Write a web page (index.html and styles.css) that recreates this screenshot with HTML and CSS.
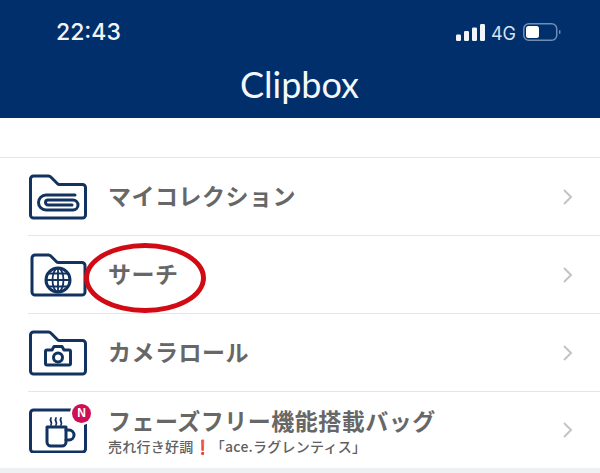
FILE: index.html
```html
<!DOCTYPE html>
<html lang="ja">
<head>
<meta charset="utf-8">
<title>Clipbox</title>
<link rel="stylesheet" href="styles.css">
</head>
<body>
<header class="header">
  <div class="status">
    <span class="time">22:43</span>
    <div class="status-right">
      <svg class="signal" width="29" height="17" viewBox="0 0 29 17"><rect x="0" y="10.500" width="5" height="6.500" rx="1.200"/><rect x="8" y="7" width="5" height="10" rx="1.200"/><rect x="16" y="3.500" width="5" height="13.500" rx="1.200"/><rect x="24" y="0" width="5" height="17" rx="1.200"/></svg>
      <span class="net">4G</span>
      <svg class="battery" width="38" height="18" viewBox="0 0 38 18"><rect x="0.750" y="0.750" width="33" height="16.500" rx="5" fill="none" stroke="#6f8db5" stroke-width="1.500"/><rect x="3" y="3" width="13" height="12" rx="2.500" fill="#fff"/><rect x="36" y="7" width="1.400" height="4" rx="0.700" fill="#6f8db5"/></svg>
    </div>
  </div>
  <h1 class="title">Clipbox</h1>
</header>
<main class="list">
  <div class="row">
    <svg class="icon" width="60" height="46" viewBox="0 0 60 46">
      <path class="ln" d="M2.500 5a3 3 0 0 1 3-3h15a3 3 0 0 1 2.300 1l6.500 6.500a3 3 0 0 0 2.300 1H54.500a3 3 0 0 1 3 3V41a3 3 0 0 1-3 3h-49a3 3 0 0 1-3-3z"/>
      <path class="ln" d="M47 21H18a7.500 7.500 0 0 0 0 15h27a5 5 0 0 0 0-10H20a2.500 2.500 0 0 0 0 5h24"/>
    </svg>
    <span class="label">マイコレクション</span>
    <svg class="chev" width="11" height="18" viewBox="0 0 11 18"><path d="M2 2l7 7-7 7"/></svg>
  </div>
  <div class="row">
    <svg class="icon" width="60" height="46" viewBox="0 0 60 46">
      <path class="ln" d="M4 6a3 3 0 0 1 3-3h13.500a3 3 0 0 1 2.300 1l5.500 5.500a3 3 0 0 0 2.300 1H54a3 3 0 0 1 3 3V40a3 3 0 0 1-3 3H7a3 3 0 0 1-3-3z"/>
      <circle class="ln" cx="30" cy="28" r="12"/>
      <ellipse class="thin" cx="30" cy="28" rx="5.500" ry="12"/>
      <path class="thin" d="M30 16v24M18 28h24M20 21.500h20M20 34.500h20"/>
    </svg>
    <span class="label">サーチ</span>
    <svg class="chev" width="11" height="18" viewBox="0 0 11 18"><path d="M2 2l7 7-7 7"/></svg>
  </div>
  <div class="row">
    <svg class="icon" width="60" height="46" viewBox="0 0 60 46">
      <path class="ln" d="M2.500 5a3 3 0 0 1 3-3h15a3 3 0 0 1 2.300 1l6.500 6.500a3 3 0 0 0 2.300 1H54.500a3 3 0 0 1 3 3V41a3 3 0 0 1-3 3h-49a3 3 0 0 1-3-3z"/>
      <path class="ln" d="M19 20h5l2-3.500h8l2 3.500h5a1.500 1.500 0 0 1 1.500 1.500v12a1.500 1.500 0 0 1-1.500 1.500H19a1.500 1.500 0 0 1-1.500-1.500v-12A1.500 1.500 0 0 1 19 20z"/>
      <circle class="ln" cx="30" cy="27.500" r="4.500"/>
    </svg>
    <span class="label">カメラロール</span>
    <svg class="chev" width="11" height="18" viewBox="0 0 11 18"><path d="M2 2l7 7-7 7"/></svg>
  </div>
  <div class="row row-last">
    <svg class="icon" width="60" height="46" viewBox="0 0 60 46">
      <path class="ln" d="M43 3H5.500a3 3 0 0 0-3 3v36a3 3 0 0 0 3 3h49a3 3 0 0 0 3-3V17"/>
      <path class="ln" d="M19 20h19v15a4 4 0 0 1-4 4H23a4 4 0 0 1-4-4z"/>
      <path class="ln" d="M38 23h3a4.500 4.500 0 0 1 0 10h-3"/>
      <path class="thin" d="M23 11c-2 3 2 4 0 7M28 11c-2 3 2 4 0 7M33 11c-2 3 2 4 0 7"/>
    </svg>
    <span class="badge">N</span>
    <div class="texts">
      <span class="label">フェーズフリー機能搭載バッグ</span>
      <span class="sub">売れ行き好調<span class="bang">❗</span>「ace.ラグレンティス」</span>
    </div>
    <svg class="chev" width="11" height="18" viewBox="0 0 11 18"><path d="M2 2l7 7-7 7"/></svg>
  </div>
</main>
<div class="ring"></div>
</body>
</html>
```
FILE: styles.css
```css
* { box-sizing: border-box; }
html, body { margin: 0; padding: 0; }
body {
  width: 600px;
  height: 473px;
  overflow: hidden;
  background: #eef0f2;
  font-family: "Noto Sans CJK JP", "Noto Sans", sans-serif;
  position: relative;
}
.header {
  height: 118px;
  background: #002f6c;
  color: #fff;
  padding: 17px 39px 0 56px;
}
.status {
  display: flex;
  justify-content: space-between;
  align-items: center;
  height: 30px;
}
.time {
  font-family: Inter, Roboto, sans-serif;
  font-size: 23px;
  font-weight: 500;
  color: #f1f5fa;
  margin-top: -1px;
}
.status-right {
  display: flex;
  align-items: center;
  gap: 6px;
}
.signal { fill: #f1f5fa; }
.net {
  font-family: Inter, Roboto, sans-serif;
  font-size: 18px;
  color: #d8e2f0;
  margin-top: 2px;
}
.battery { margin-left: 1px; }
.title {
  margin: 13px 0 0 -18px;
  text-align: center;
  font-family: Lato, sans-serif;
  font-size: 36px;
  font-weight: 400;
  line-height: 48px;
  color: #f4f7fb;
}
.list {
  background: #fff;
  height: 350px;
  padding-top: 39px;
}
.row {
  display: flex;
  align-items: center;
  position: relative;
  height: 78px;
  padding-right: 27px;
  border-top: 1px solid #e6e6e6;
  margin-left: 28px;
}
.row:first-child { margin-left: 0; padding-left: 28px; }
.row-last { height: 77px; }
.icon { flex: none; margin-right: 20px; }
.label {
  flex: 1;
  font-size: 23px;
  font-weight: 700;
  line-height: 24px;
  color: #676767;
  letter-spacing: 0.5px;
  margin-top: -3px;
}
.texts {
  flex: 1;
  display: flex;
  flex-direction: column;
  gap: 6px;
  margin-top: 2px;
}
.texts .label { flex: none; margin-top: 0; }
.sub {
  font-size: 14px;
  line-height: 17px;
  color: #606060;
  font-weight: 500;
  letter-spacing: 0.25px;
  white-space: nowrap;
}
.bang { color: #d9202c; font-weight: 900; }
.chev { flex: none; }
.chev path { fill: none; stroke: #c4c4c4; stroke-width: 2; }
.ln { fill: none; stroke: #12335f; stroke-width: 3; stroke-linejoin: round; stroke-linecap: round; }
.thin { fill: none; stroke: #12335f; stroke-width: 1.800; stroke-linecap: round; }
.badge {
  position: absolute;
  left: 44px;
  top: 12px;
  width: 19px;
  height: 19px;
  border-radius: 50%;
  background: #cf0f55;
  color: #fff;
  font-family: "Liberation Sans", sans-serif;
  font-size: 12px;
  font-weight: 700;
  line-height: 19px;
  text-align: center;
  box-shadow: 0 0 0 2px #fff;
}
.ring {
  position: absolute;
  left: 84px;
  top: 243px;
  width: 122px;
  height: 70px;
  border: 5px solid #d20a14;
  border-radius: 50%;
}
```
